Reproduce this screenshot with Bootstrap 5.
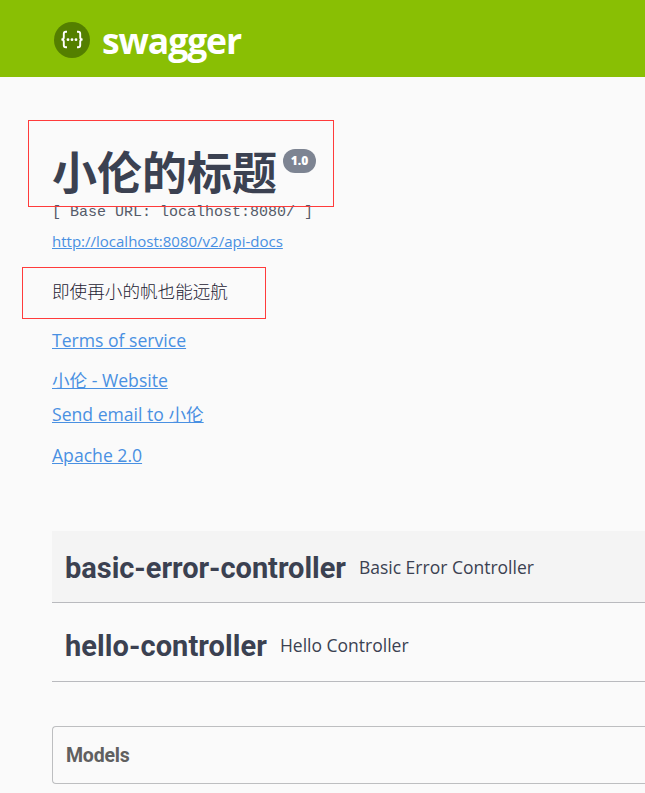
<!DOCTYPE html>
<html lang="zh-CN">
<head>
<meta charset="utf-8">
<meta name="viewport" content="width=device-width, initial-scale=1">
<title>Swagger UI</title>
<link href="https://cdn.jsdelivr.net/npm/bootstrap@5.3.0/dist/css/bootstrap.min.css" rel="stylesheet">
<style>
body{background:#fafafa;color:#3b4151;font-family:"Open Sans","Noto Sans CJK SC",sans-serif;font-size:17.6px;overflow:hidden}
a,a:hover{color:#4990e2}
.topbar{height:77px;background:#89bf04;padding:2px 0 0 54px}
.brand-name{font:700 35.5px/50px "Open Sans",sans-serif;letter-spacing:-1.1px;color:#fff;margin-left:12px}
.page{padding-left:52px}
.info{padding-top:66px;height:454px}
.api-title{font-size:45px;line-height:60px;font-weight:700}
.version{font:800 12px/24px "Open Sans",sans-serif;width:33px;height:24px;background:#7d8492;margin:6px 0 0 6px}
.base-url{font:15px/18px "Liberation Mono",monospace;white-space:pre;margin-top:1px;color:#555b69}
.docs-link{font-size:15px;line-height:20px;margin-top:9px}
.text-line{line-height:24px}
.api-desc{margin-top:28px;font-weight:300;color:#1d2233}
.terms{margin-top:25px}
.site{margin-top:16px}
.mail{margin-top:10px}
.license{margin-top:17px}
.tag-row{height:72px;padding:0 0 0 13px;border-bottom:1px solid #b9babe}
.tag-row.active{background:#f4f4f4;padding-top:2px}
.tag-row + .tag-row{margin-top:7px}
.tag-name{font:700 29px/40px "Roboto",sans-serif;letter-spacing:-.03px}
.tag-row + .tag-row .tag-name{letter-spacing:.07px}
.tag-desc{font-size:17.5px;margin-left:13px}
.models{margin-top:44px;height:58px;border:1px solid #bdbec0;border-right:0;border-radius:4px 0 0 4px;padding:2px 0 0 13px;font:700 19.5px/24px "Roboto",sans-serif;letter-spacing:-.2px;color:#606060}
.mark-box{border:1px solid #ff3b3b}
.mark-title{left:28px;top:120px;width:306px;height:87px}
.mark-desc{left:22px;top:267px;width:244px;height:52px}
</style>
<script src="https://cdn.jsdelivr.net/npm/bootstrap@5.3.0/dist/js/bootstrap.bundle.min.js"></script>
</head>
<body class="position-relative">
<header class="topbar d-flex align-items-center">
  <svg width="36" height="36" viewBox="0 0 36 36" fill="none" stroke="#fff" stroke-width="1.9">
    <circle cx="18" cy="18" r="18" fill="#547f00" stroke="none"/>
    <path d="M13 9.8h-1.2q-2 0-2 2v3.4q0 2.3-2.4 2.3 2.4 0 2.4 2.3v3.4q0 2 2 2H13M23 9.8h1.2q2 0 2 2v3.4q0 2.3 2.4 2.3-2.4 0-2.4 2.3v3.4q0 2-2 2H23"/>
    <g fill="#fff" stroke="none"><circle cx="14" cy="17.7" r="1.4"/><circle cx="18" cy="17.7" r="1.4"/><circle cx="22" cy="17.7" r="1.4"/></g>
  </svg>
  <span class="brand-name">swagger</span>
</header>
<main class="page">
  <section class="info">
    <div class="d-flex align-items-start">
      <h1 class="api-title m-0">小伦的标题</h1>
      <span class="version rounded-pill text-white text-center">1.0</span>
    </div>
    <div class="base-url">[ Base URL: localhost:8080/ ]</div>
    <div class="docs-link"><a href="#">http://localhost:8080/v2/api-docs</a></div>
    <div class="text-line api-desc">即使再小的帆也能远航</div>
    <div class="text-line terms"><a href="#">Terms of service</a></div>
    <div class="text-line site"><a href="#">小伦 - Website</a></div>
    <div class="text-line mail"><a href="#">Send email to 小伦</a></div>
    <div class="text-line license"><a href="#">Apache 2.0</a></div>
  </section>
  <section class="tag-row active d-flex align-items-center">
    <span class="tag-name">basic-error-controller</span><span class="tag-desc">Basic Error Controller</span>
  </section>
  <section class="tag-row d-flex align-items-center">
    <span class="tag-name">hello-controller</span><span class="tag-desc">Hello Controller</span>
  </section>
  <section class="models d-flex align-items-center">Models</section>
</main>
<div class="mark-box mark-title position-absolute"></div>
<div class="mark-box mark-desc position-absolute"></div>
</body>
</html>
